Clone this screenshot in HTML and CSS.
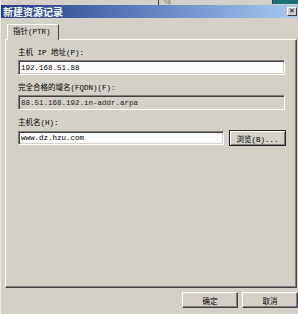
FILE: index.html
```html
<!DOCTYPE html>
<html lang="zh-CN">
<head>
    <meta charset="UTF-8">
    <title>新建资源记录</title>
    <link rel="stylesheet" href="styles.css">
</head>
<body>
    <!-- Window behind -->
    <div class="behind">
        <span class="behind-col">下级</span>
        <span class="behind-teal"></span>
    </div>

    <!-- Title bar -->
    <div class="titlebar">
        <span class="title">新建资源记录</span>
        <button class="close-btn">&#x2715;</button>
    </div>

    <!-- Tabs -->
    <div class="tabs">
        <div class="tab active">指针(PTR)</div>
    </div>

    <div class="panel">
        <div class="field">
            <label>主机 IP 地址(P):</label>
            <input type="text" class="textbox" value="192.168.51.88">
        </div>
        <div class="field">
            <label>完全合格的域名(FQDN)(F):</label>
            <input type="text" class="textbox disabled" value="88.51.168.192.in-addr.arpa" readonly>
        </div>
        <div class="field">
            <label>主机名(H):</label>
            <div class="row">
                <input type="text" class="textbox" value="www.dz.hzu.com">
                <button class="btn browse">浏览(B)...</button>
            </div>
        </div>
    </div>

    <!-- Footer buttons -->
    <div class="footer">
        <button class="btn">确定</button>
        <button class="btn">取消</button>
    </div>
</body>
</html>
```

FILE: styles.css
```css
* {
    margin: 0;
    padding: 0;
    box-sizing: border-box;
}

body {
    width: 298px;
    height: 314px;
    overflow: hidden;
    background-color: #d4d0c8;
    font-family: "Liberation Mono", "Noto Sans CJK SC", monospace;
    font-size: 7.5px;
    color: #000;
    border-left: 1px solid #ece9e2;
}

/* Window behind */
.behind {
    height: 5px;
    display: flex;
    align-items: center;
    background-color: #d4d0c8;
}

.behind-col {
    margin-left: 157px;
    padding-left: 4px;
    border-left: 1px solid #404040;
    font-family: "Noto Sans CJK SC", sans-serif;
    font-size: 4px;
    line-height: 5px;
    color: #666;
}

.behind-teal {
    margin-left: auto;
    width: 26px;
    height: 4px;
    align-self: flex-start;
    border-left: 1px solid #333;
    background-color: #1c6f7e;
}

/* Title bar */
.titlebar {
    height: 13px;
    display: flex;
    align-items: center;
    justify-content: space-between;
    padding: 0 1px 0 2px;
    background: linear-gradient(to right, #1f3d84, #5a7cbc 45%, #a6caf0);
}

.title {
    font-family: "Noto Sans CJK SC", sans-serif;
    font-size: 10px;
    font-weight: bold;
    color: #fff;
    line-height: 12px;
}

.close-btn {
    width: 10px;
    height: 9px;
    font-family: "DejaVu Sans", sans-serif;
    font-size: 7px;
    font-weight: bold;
    line-height: 7px;
    color: #000;
    background-color: #d4d0c8;
    border: 1px solid;
    border-color: #fff #404040 #404040 #fff;
}

/* Tabs */
.tabs {
    display: flex;
    margin-top: 6px;
    padding-left: 6px;
}

.tab {
    position: relative;
    z-index: 1;
    width: 52px;
    height: 16px;
    margin-bottom: -1px;
    padding: 3px 0 0 5px;
    line-height: 9px;
    background-color: #d4d0c8;
    border: 1px solid;
    border-color: #fff #404040 transparent #fff;
    border-bottom: none;
}

/* Panel */
.panel {
    width: 292px;
    height: 249px;
    margin-left: 4px;
    padding: 8px 10px 0 12px;
    border: 1px solid;
    border-color: #fff #404040 #404040 #fff;
    box-shadow: inset -1px -1px 0 #808080;
    display: flex;
    flex-direction: column;
    gap: 8px;
}

.field {
    display: flex;
    flex-direction: column;
    gap: 2px;
}

.field label {
    height: 10px;
    line-height: 10px;
}

.row {
    display: flex;
    align-items: center;
    gap: 5px;
}

.textbox {
    width: 267px;
    height: 15px;
    padding: 0 2px;
    font-family: "Liberation Mono", "Noto Sans CJK SC", monospace;
    font-size: 7.5px;
    color: #000;
    background-color: #fcfcfc;
    border: 1px solid;
    border-color: #808080 #fff #fff #808080;
    box-shadow: inset 1px 1px 0 #404040, inset -1px -1px 0 #d4d0c8;
    outline: none;
}

.textbox.disabled {
    background-color: #d4d0c8;
    color: #222;
}

.row .textbox {
    width: 206px;
    height: 14px;
}

/* Buttons */
.btn {
    width: 56px;
    height: 16px;
    font-family: "Liberation Mono", "Noto Sans CJK SC", monospace;
    font-size: 7.5px;
    color: #000;
    background-color: #d4d0c8;
    border: 1px solid;
    border-color: #fff #404040 #404040 #fff;
    box-shadow: inset -1px -1px 0 #808080;
}

.btn.browse {
    width: 57px;
    border: 1px solid #222;
    box-shadow: inset 1px 1px 0 #fff, inset -1px -1px 0 #808080;
}

.footer {
    display: flex;
    justify-content: flex-end;
    gap: 4px;
    padding-top: 4px;
}
```
